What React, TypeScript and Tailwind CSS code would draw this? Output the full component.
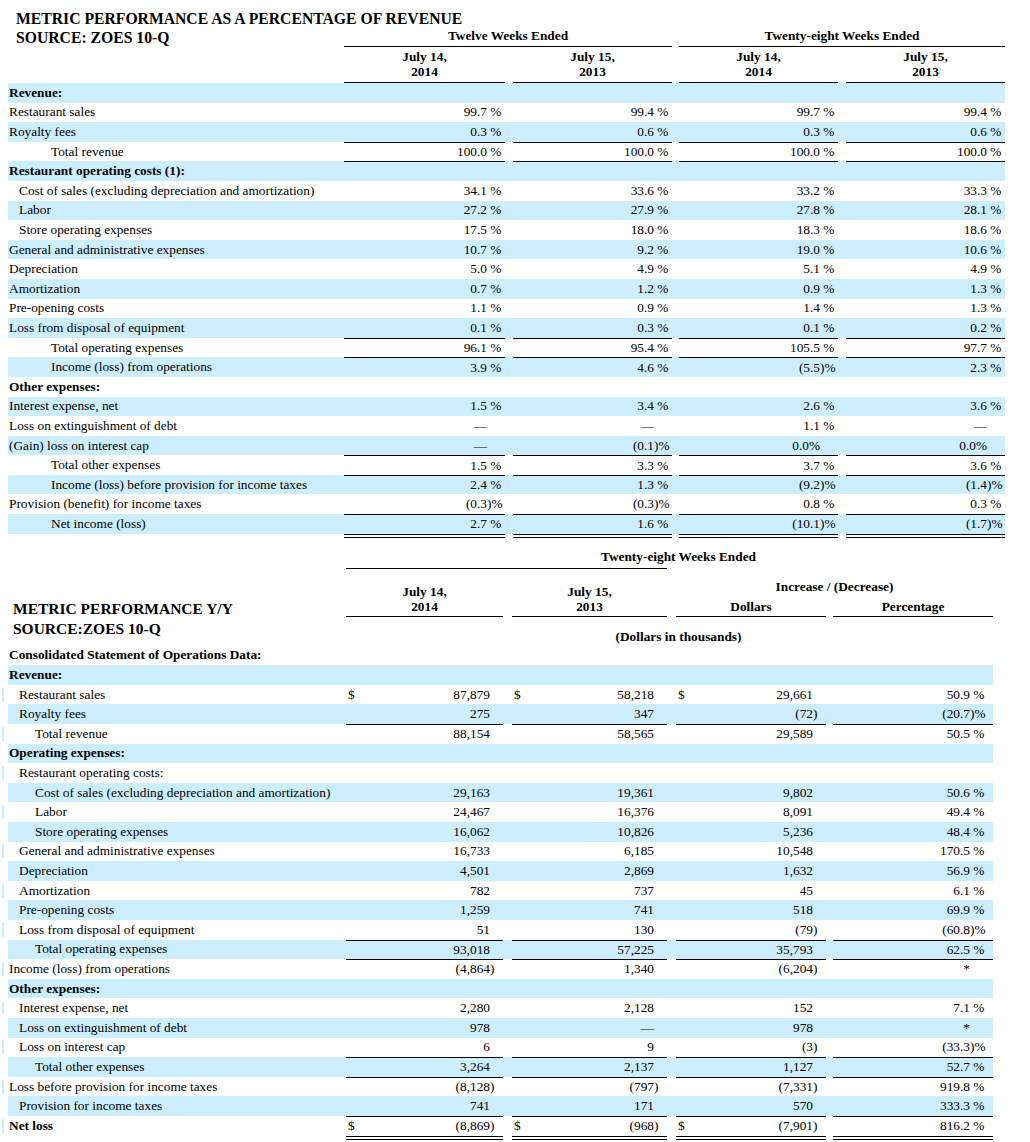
import React from "react";

type V = [string, string];

const p = (x: string): V => [x, " %"];
const ng = (x: string): V => ["(" + x, ")%"];
const dash: V = ["\u2014", ""];
const zero: V = ["0.0%", ""];

type TopRowT = {
  label: string;
  indent?: number;
  bold?: boolean;
  vals?: V[];
  top?: boolean;
};

const topRows: TopRowT[] = [
  { label: "Revenue:", bold: true },
  { label: "Restaurant sales", vals: [p("99.7"), p("99.4"), p("99.7"), p("99.4")] },
  { label: "Royalty fees", vals: [p("0.3"), p("0.6"), p("0.3"), p("0.6")] },
  { label: "Total revenue", indent: 2, top: true, vals: [p("100.0"), p("100.0"), p("100.0"), p("100.0")] },
  { label: "Restaurant operating costs (1):", bold: true, top: true },
  { label: "Cost of sales (excluding depreciation and amortization)", indent: 1, vals: [p("34.1"), p("33.6"), p("33.2"), p("33.3")] },
  { label: "Labor", indent: 1, vals: [p("27.2"), p("27.9"), p("27.8"), p("28.1")] },
  { label: "Store operating expenses", indent: 1, vals: [p("17.5"), p("18.0"), p("18.3"), p("18.6")] },
  { label: "General and administrative expenses", vals: [p("10.7"), p("9.2"), p("19.0"), p("10.6")] },
  { label: "Depreciation", vals: [p("5.0"), p("4.9"), p("5.1"), p("4.9")] },
  { label: "Amortization", vals: [p("0.7"), p("1.2"), p("0.9"), p("1.3")] },
  { label: "Pre-opening costs", vals: [p("1.1"), p("0.9"), p("1.4"), p("1.3")] },
  { label: "Loss from disposal of equipment", vals: [p("0.1"), p("0.3"), p("0.1"), p("0.2")] },
  { label: "Total operating expenses", indent: 2, top: true, vals: [p("96.1"), p("95.4"), p("105.5"), p("97.7")] },
  { label: "Income (loss) from operations", indent: 2, top: true, vals: [p("3.9"), p("4.6"), ng("5.5"), p("2.3")] },
  { label: "Other expenses:", bold: true },
  { label: "Interest expense, net", vals: [p("1.5"), p("3.4"), p("2.6"), p("3.6")] },
  { label: "Loss on extinguishment of debt", vals: [dash, dash, p("1.1"), dash] },
  { label: "(Gain) loss on interest cap", vals: [dash, ng("0.1"), zero, zero] },
  { label: "Total other expenses", indent: 2, top: true, vals: [p("1.5"), p("3.3"), p("3.7"), p("3.6")] },
  { label: "Income (loss) before provision for income taxes", indent: 2, top: true, vals: [p("2.4"), p("1.3"), ng("9.2"), ng("1.4")] },
  { label: "Provision (benefit) for income taxes", vals: [ng("0.3"), ng("0.3"), p("0.8"), p("0.3")] },
  { label: "Net income (loss)", indent: 2, top: true, vals: [p("2.7"), p("1.6"), ng("10.1"), ng("1.7")] },
];

type BotRowT = {
  label: string;
  indent?: number;
  bold?: boolean;
  vals?: string[];
  dollar?: boolean;
  top?: boolean;
};

const botRows: BotRowT[] = [
  { label: "Revenue:", bold: true },
  { label: "Restaurant sales", indent: 1, dollar: true, vals: ["87,879", "58,218", "29,661", "50.9 %"] },
  { label: "Royalty fees", indent: 1, vals: ["275", "347", "(72)", "(20.7)%"] },
  { label: "Total revenue", indent: 2, top: true, vals: ["88,154", "58,565", "29,589", "50.5 %"] },
  { label: "Operating expenses:", bold: true },
  { label: "Restaurant operating costs:", indent: 1 },
  { label: "Cost of sales (excluding depreciation and amortization)", indent: 2, vals: ["29,163", "19,361", "9,802", "50.6 %"] },
  { label: "Labor", indent: 2, vals: ["24,467", "16,376", "8,091", "49.4 %"] },
  { label: "Store operating expenses", indent: 2, vals: ["16,062", "10,826", "5,236", "48.4 %"] },
  { label: "General and administrative expenses", indent: 1, vals: ["16,733", "6,185", "10,548", "170.5 %"] },
  { label: "Depreciation", indent: 1, vals: ["4,501", "2,869", "1,632", "56.9 %"] },
  { label: "Amortization", indent: 1, vals: ["782", "737", "45", "6.1 %"] },
  { label: "Pre-opening costs", indent: 1, vals: ["1,259", "741", "518", "69.9 %"] },
  { label: "Loss from disposal of equipment", indent: 1, vals: ["51", "130", "(79)", "(60.8)%"] },
  { label: "Total operating expenses", indent: 2, top: true, vals: ["93,018", "57,225", "35,793", "62.5 %"] },
  { label: "Income (loss) from operations", top: true, vals: ["(4,864)", "1,340", "(6,204)", "*"] },
  { label: "Other expenses:", bold: true },
  { label: "Interest expense, net", indent: 1, vals: ["2,280", "2,128", "152", "7.1 %"] },
  { label: "Loss on extinguishment of debt", indent: 1, vals: ["978", "\u2014", "978", "*"] },
  { label: "Loss on interest cap", indent: 1, vals: ["6", "9", "(3)", "(33.3)%"] },
  { label: "Total other expenses", indent: 2, top: true, vals: ["3,264", "2,137", "1,127", "52.7 %"] },
  { label: "Loss before provision for income taxes", top: true, vals: ["(8,128)", "(797)", "(7,331)", "919.8 %"] },
  { label: "Provision for income taxes", indent: 1, vals: ["741", "171", "570", "333.3 %"] },
  { label: "Net loss", bold: true, top: true, dollar: true, vals: ["(8,869)", "(968)", "(7,901)", "816.2 %"] },
];

const topCols = [
  "w-[161px]",
  "ml-[8px] w-[159px]",
  "ml-[7px] w-[159px]",
  "ml-[8px] w-[159px]",
];

const botCols = [
  "w-[157px]",
  "ml-[9px] w-[155px]",
  "ml-[9px] w-[150px]",
  "ml-[7px] w-[160px]",
];

const topIndent = ["pl-[1px]", "pl-[11px]", "pl-[43px]"];
const botIndent = ["pl-[1px]", "pl-[11px]", "pl-[27px]"];

function TopRow({ r, i }: { r: TopRowT; i: number }) {
  const blue = i % 2 === 0;
  return (
    <div className={`flex h-[19.6px] w-[997px] ${blue ? "bg-[#cceeff]" : ""}`}>
      <div
        className={`flex w-[336px] items-center whitespace-nowrap ${topIndent[r.indent ?? 0]} ${r.bold ? "font-bold" : ""}`}
      >
        {r.label}
      </div>
      {topCols.map((c, j) => (
        <div
          key={j}
          className={`${c} flex items-center justify-end pr-[3px] ${r.top ? "border-t border-black" : ""}`}
        >
          {r.vals && (
            <>
              <span>{r.vals[j][0]}</span>
              <span className="w-[15px] whitespace-pre">{r.vals[j][1]}</span>
            </>
          )}
        </div>
      ))}
    </div>
  );
}

function splitNum(v: string): [string, string] {
  if (v.startsWith("(")) return [v.slice(0, -1), ")"];
  return [v, ""];
}

function splitPct(v: string): [string, string] {
  if (v.endsWith(")%")) return [v.slice(0, -2), ")%"];
  if (v.endsWith(" %")) return [v.slice(0, -2), " %"];
  return [v, ""];
}

function BotRow({ r, i }: { r: BotRowT; i: number }) {
  const blue = i % 2 === 0;
  return (
    <div className="flex">
      <div className="flex w-[8px] items-center">
        {!blue && <div className="ml-[2px] h-[14px] w-[2px] bg-[#cceeff]" />}
      </div>
      <div className={`flex h-[19.6px] w-[985px] ${blue ? "bg-[#cceeff]" : ""}`}>
        <div
          className={`flex w-[338px] items-center whitespace-nowrap ${botIndent[r.indent ?? 0]} ${r.bold ? "font-bold" : ""}`}
        >
          {r.label}
        </div>
        {botCols.map((c, j) => {
          const border = r.top ? "border-t border-black" : "";
          if (j === 3) {
            const [a, b] = r.vals ? splitPct(r.vals[3]) : ["", ""];
            return (
              <div key={j} className={`${c} flex items-center justify-end pr-[8px] ${border}`}>
                {r.vals && (
                  <>
                    <span>{a}</span>
                    <span className="w-[15px] whitespace-pre">{b}</span>
                  </>
                )}
              </div>
            );
          }
          const [a, b] = r.vals ? splitNum(r.vals[j]) : ["", ""];
          return (
            <div key={j} className={`${c} flex items-center ${border}`}>
              {r.dollar && <span className="pl-[2px]">$</span>}
              <span className="flex-1 text-right">{a}</span>
              <span className="w-[13px]">{b}</span>
            </div>
          );
        })}
      </div>
    </div>
  );
}

export default function App() {
  return (
    <div
      className="min-h-[1142px] w-[1030px] bg-white text-[13.33px] text-black"
      style={{ fontFamily: '"Liberation Serif", "Times New Roman", serif' }}
    >
      {/* Top table */}
      <div className="ml-[8px]">
        <div className="flex h-[47px]">
          <div className="w-[336px] whitespace-nowrap pl-[8px] pt-[9px] text-[15.7px] font-bold leading-[19px]">
            <div>METRIC PERFORMANCE AS A PERCENTAGE OF REVENUE</div>
            <div>SOURCE: ZOES 10-Q</div>
          </div>
          <div className="flex w-[328px] items-end justify-center border-b border-black pb-[2px] font-bold leading-[16px]">
            Twelve Weeks Ended
          </div>
          <div className="ml-[7px] flex w-[326px] items-end justify-center border-b border-black pb-[2px] font-bold leading-[16px]">
            Twenty-eight Weeks Ended
          </div>
        </div>
        <div className="flex h-[36px]">
          <div className="w-[336px]" />
          {[
            ["July 14,", "2014"],
            ["July 15,", "2013"],
            ["July 14,", "2014"],
            ["July 15,", "2013"],
          ].map((d, j) => (
            <div
              key={j}
              className={`${topCols[j]} flex flex-col items-center justify-end border-b border-black pb-[3px] font-bold leading-[15px]`}
            >
              <div>{d[0]}</div>
              <div>{d[1]}</div>
            </div>
          ))}
        </div>
        {topRows.map((r, i) => (
          <TopRow key={i} r={r} i={i} />
        ))}
        <div className="flex h-[4px]">
          <div className="w-[336px]" />
          {topCols.map((c, j) => (
            <div key={j} className={`${c} border-t-4 border-double border-black`} />
          ))}
        </div>
      </div>

      {/* Bottom table header */}
      <div className="ml-[8px]">
        <div className="flex h-[31px]">
          <div className="w-[338px]" />
          <div className="flex w-[655px] flex-col">
            <div className="pl-[10px] pt-[11px] text-center font-bold leading-[16px]">
              Twenty-eight Weeks Ended
            </div>
            <div className="mt-[3px] w-[321px] border-t border-black" />
          </div>
        </div>
        <div className="flex">
          <div className="w-[338px] whitespace-nowrap pl-[5px] pt-[30px] text-[15.5px] font-bold leading-[20px]">
            <div>METRIC PERFORMANCE Y/Y</div>
            <div>SOURCE:ZOES 10-Q</div>
          </div>
          <div className="flex w-[655px] flex-col">
            <div className="flex h-[48px]">
              {[
                ["July 14,", "2014"],
                ["July 15,", "2013"],
              ].map((d, j) => (
                <div
                  key={j}
                  className={`${botCols[j]} flex flex-col items-center justify-end border-b border-black pb-[2px] font-bold leading-[15px]`}
                >
                  <div>{d[0]}</div>
                  <div>{d[1]}</div>
                </div>
              ))}
              <div className="ml-[9px] flex w-[317px] flex-col justify-end font-bold">
                <div className="mb-[4px] text-center leading-[16px]">Increase / (Decrease)</div>
                <div className="flex">
                  <div className="w-[150px] border-b border-black pb-[2px] text-center leading-[15px]">
                    Dollars
                  </div>
                  <div className="ml-[7px] w-[160px] border-b border-black pb-[2px] text-center leading-[15px]">
                    Percentage
                  </div>
                </div>
              </div>
            </div>
            <div className="h-[29px] pl-[10px] pt-[12px] text-center font-bold leading-[16px]">
              (Dollars in thousands)
            </div>
          </div>
        </div>
        <div className="flex h-[19.6px] items-center pl-[1px] font-bold">
          Consolidated Statement of Operations Data:
        </div>
      </div>

      {/* Bottom table rows */}
      <div>
        {botRows.map((r, i) => (
          <BotRow key={i} r={r} i={i} />
        ))}
        <div className="flex h-[4px]">
          <div className="w-[8px]" />
          <div className="w-[338px]" />
          {botCols.map((c, j) => (
            <div key={j} className={`${c} border-t-4 border-double border-black`} />
          ))}
        </div>
      </div>
    </div>
  );
}
